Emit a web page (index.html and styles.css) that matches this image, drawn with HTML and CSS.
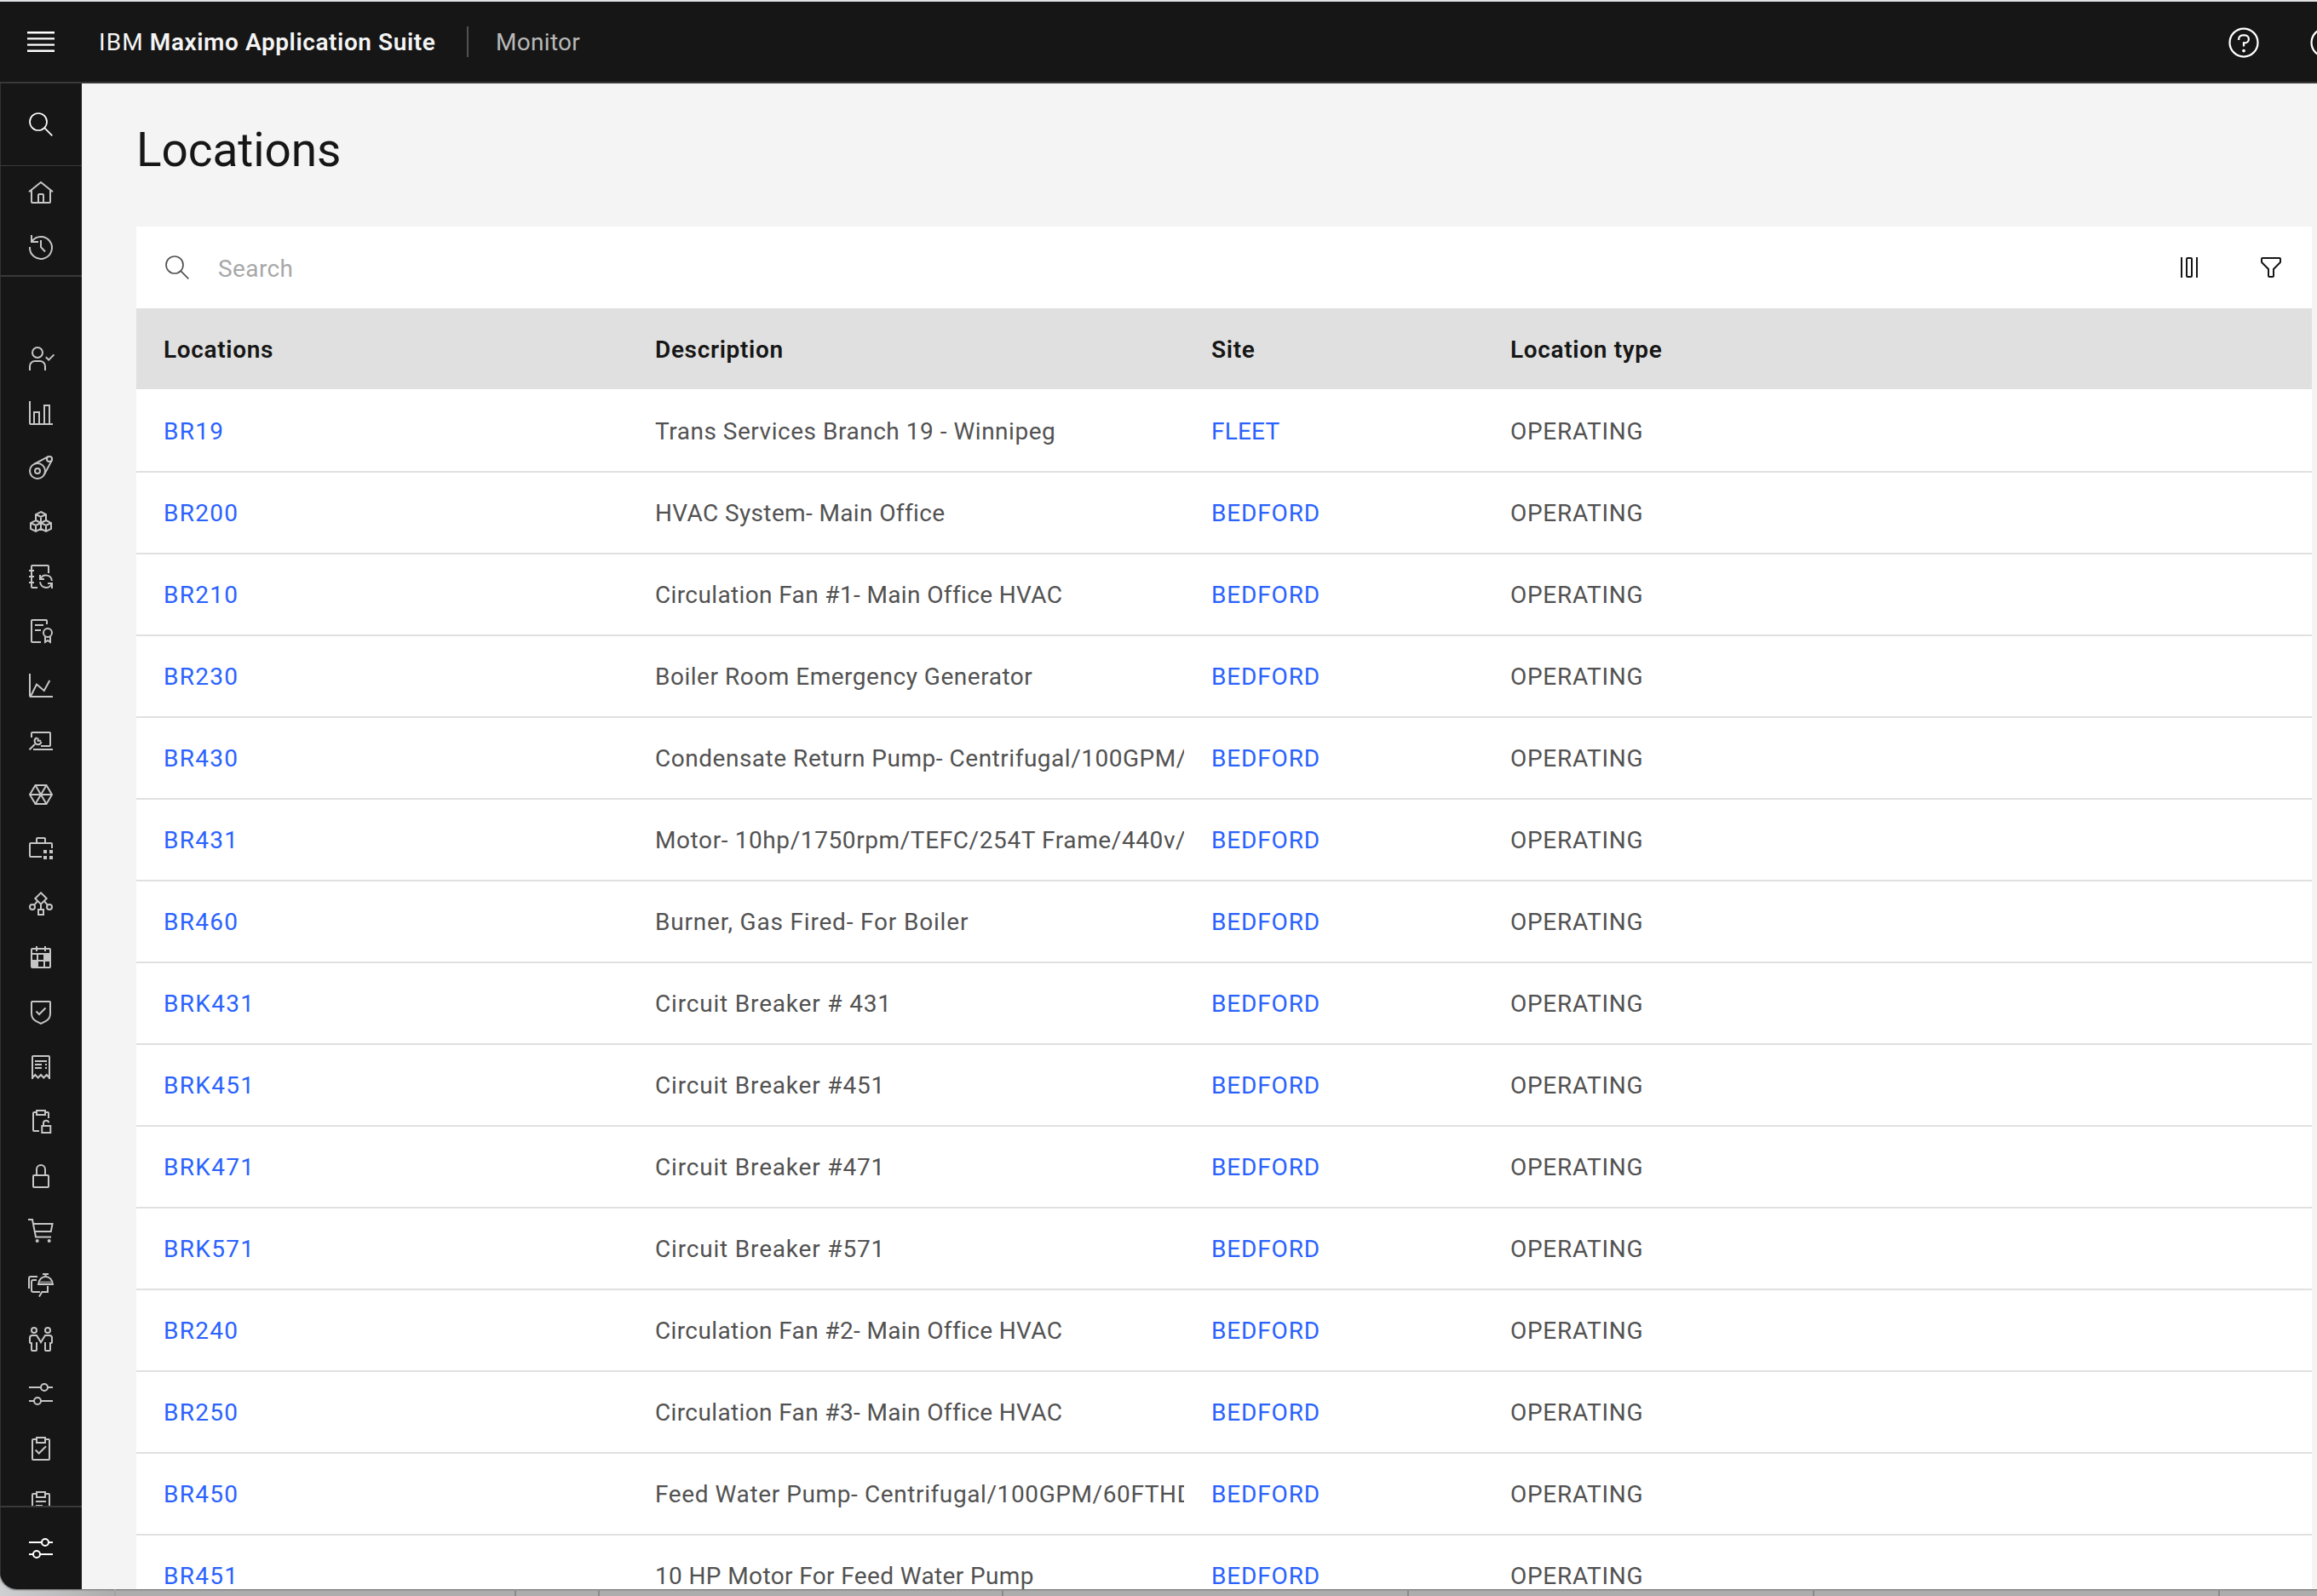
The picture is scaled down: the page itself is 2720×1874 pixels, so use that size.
FILE: index.html
```html
<!DOCTYPE html>
<html lang="en">
<head>
<meta charset="utf-8">
<title>Locations - Monitor</title>
<link rel="stylesheet" href="styles.css">
</head>
<body>
<div class="window">
  <header class="header">
    <button class="menu-button" aria-label="Menu">
      <svg class="menu-icon" viewBox="0 0 40 40"><path d="M4 9.2h32M4 16.4h32M4 23.6h32M4 30.8h32"/></svg>
    </button>
    <div class="brand"><span class="brand-prefix">IBM</span><span class="brand-name">Maximo Application Suite</span></div>
    <div class="app-name">Monitor</div>
    <div class="header-actions">
      <svg class="action-icon" viewBox="0 0 32 32"><circle cx="16" cy="16" r="13.2"/><path d="M11.3 13.6v-.9a3.6 3.6 0 0 1 3.6-3.6h2.2a3.6 3.6 0 0 1 0 7.2H16v3.3"/><circle class="solid" cx="16" cy="23.6" r="1.5"/></svg>
      <svg class="action-icon" viewBox="0 0 32 32"><circle cx="16" cy="16" r="13.2"/></svg>
    </div>
  </header>
  <div class="body">
    <nav class="rail">
      <div class="rail-search"><svg class="icon thin" viewBox="0 0 32 32"><circle cx="13" cy="13" r="10"/><path d="M20.2 20.2L29.3 29.3"/></svg></div>
      <div class="rail-top">
        <svg class="icon" viewBox="0 0 32 32"><path d="M2 15.2L16 4l14 11.2M5 13v14a1 1 0 0 0 1 1h20a1 1 0 0 0 1-1V13M13 28V19a1 1 0 0 1 1-1h4a1 1 0 0 1 1 1v9"/></svg>
        <svg class="icon" viewBox="0 0 32 32"><path d="M5 3v8h8M5.3 10.5A13 13 0 1 1 3 17M16 9v8.2l5 5.3"/></svg>
      </div>
      <div class="rail-list">
        <svg class="icon" viewBox="0 0 32 32"><circle cx="12" cy="9" r="6"/><path d="M3 30v-5a6 6 0 0 1 6-6h6a6 6 0 0 1 6 6v5M21.8 14.2l3.4 3.4 6.2-6.2"/></svg>
        <svg class="icon" viewBox="0 0 32 32"><path d="M3 2v26a1 1 0 0 0 1 1h26M8 29V15h6v14M20 29V7h6v22"/></svg>
        <svg class="icon" viewBox="0 0 32 32"><circle cx="12" cy="20" r="9"/><circle cx="12" cy="20" r="3"/><circle cx="26" cy="6" r="3.1"/><path d="M8.2 11.8L24.6 3.2M28.9 7.4L20.4 23.4"/></svg>
        <svg class="icon" viewBox="0 0 32 32"><path d="M16 4l6 3v7l-6 3-6-3V7zM10 7l6 3 6-3M16 10v7M10 14l6 3v7l-6 3-6-3v-7zM4 17l6 3 6-3M10 20v7M22 14l6 3v7l-6 3-6-3v-7zM16 17l6 3 6-3M22 20v7"/></svg>
        <svg class="icon" viewBox="0 0 32 32"><path d="M25 12V4a1 1 0 0 0-1-1H6a1 1 0 0 0-1 1v24a1 1 0 0 0 1 1h6M2 9h6M2 16h6M2 23h6M15 14v5h5M15.4 19a7 7 0 0 1 13.5 2M29 30v-6h-5M28.6 24.5A7 7 0 0 1 15.1 22.3"/></svg>
        <svg class="icon" viewBox="0 0 32 32"><path d="M23 8V4a1 1 0 0 0-1-1H6a1 1 0 0 0-1 1v24a1 1 0 0 0 1 1h10M9 9h10M9 15h7M21 22.5V29l3-2 3 2v-6.500"/><circle cx="24" cy="18" r="5"/></svg>
        <svg class="icon" viewBox="0 0 32 32"><path d="M3 2v26a1 1 0 0 0 1 1h26M4 28.500L11 14.500l8.800 7.500 6.500-12"/></svg>
        <svg class="icon" viewBox="0 0 32 32"><path d="M5 13V8a1 1 0 0 1 1-1h20a1 1 0 0 1 1 1v14a1 1 0 0 1-1 1H16M7 27h23M2.500 27.300l6.300-6.300M11.500 13.300a4 4 0 1 0 5 4.700M12.600 13.500v3.300h3.600"/></svg>
        <svg class="icon" viewBox="0 0 32 32"><path d="M9.500 5h13L29 16l-6.500 11h-13L3 16zM3 16h26M9.500 5l13 22M22.500 5l-13 22"/></svg>
        <svg class="icon" viewBox="0 0 32 32"><path d="M29 15v-5a1 1 0 0 0-1-1H4a1 1 0 0 0-1 1v14a1 1 0 0 0 1 1h13M11 9V4a1 1 0 0 1 1-1h8a1 1 0 0 1 1 1v5"/><path class="solid" d="M19 17h4v4h-4zM26 17h4v4h-4zM19 24h4v4h-4zM26 24h4v4h-4z"/></svg>
        <svg class="icon" viewBox="0 0 32 32"><path d="M16 3.300L22.700 10 16 16.700 9.300 10zM16 17v6M8.200 17.600l3.600-4.300M23.800 17.600l-3.600-4.300M13 23h6v6h-6z"/><circle cx="6" cy="20" r="3"/><circle cx="26" cy="20" r="3"/></svg>
        <svg class="icon" viewBox="0 0 32 32"><path class="solid" fill-rule="evenodd" d="M6 4h4V2h2v2h8V2h2v2h4a2 2 0 0 1 2 2v20a2 2 0 0 1-2 2H6a2 2 0 0 1-2-2V6a2 2 0 0 1 2-2zM6 6v4h20V6h-4v2h-2V6h-8v2h-2V6zM6 12v6h5v-6zM13 12v6h6v-6zM13 20v6h6v-6zM21 20v6h5v-6z"/></svg>
        <svg class="icon" viewBox="0 0 32 32"><path d="M6 3h20a1 1 0 0 1 1 1v13c0 5-2.500 7.600-5.500 9.200L16 29l-5.500-2.800C7.500 24.600 5 22 5 17V4a1 1 0 0 1 1-1zM10.500 14.500l3.500 3.500 7.500-7.500"/></svg>
        <svg class="icon" viewBox="0 0 32 32"><path d="M6 30V4a1 1 0 0 1 1-1h18a1 1 0 0 1 1 1v26M6 28.500l3.300-3.500 3.400 3.500L16 25l3.300 3.500 3.400-3.500 3.300 3.500M9 9h14M9 13h8M9 17h8M21 13h2M21 17h2"/></svg>
        <svg class="icon" viewBox="0 0 32 32"><path d="M11 5H8a1 1 0 0 0-1 1v20a1 1 0 0 0 1 1h6M21 5h3a1 1 0 0 1 1 1v6M11 3h10v5H11zM17.300 21h10v8h-10zM19 21v-3a3.200 3.200 0 0 1 6.300-.800"/></svg>
        <svg class="icon" viewBox="0 0 32 32"><rect x="7" y="15" width="18" height="14" rx="1"/><path d="M11 15V8a5 5 0 0 1 10 0v7"/></svg>
        <svg class="icon" viewBox="0 0 32 32"><path d="M1 3h5l4 20.500h18M7 8h22.500l-1.700 9H8.800"/><circle class="solid" cx="11.700" cy="28" r="2"/><circle class="solid" cx="25.700" cy="28" r="2"/></svg>
        <svg class="icon" viewBox="0 0 32 32"><path d="M2 20V8a2 2 0 0 1 2-2h8M11 10H7a2 2 0 0 0-2 2v10a2 2 0 0 0 2 2h8M14 29.500l3.300-5.500H24V17M12 15h19M13.500 14a8 8 0 0 1 16 0M21.500 6V3M18 3h7"/><path class="muted" d="M14 12.500h15"/></svg>
        <svg class="icon" viewBox="0 0 32 32"><circle cx="8" cy="5" r="3"/><circle cx="24" cy="5" r="3"/><path d="M11 19v9a1 1 0 0 1-1 1H6a1 1 0 0 1-1-1v-8H4a1 1 0 0 1-1-1v-5a3 3 0 0 1 3-3h5l5 8 5-8h5a3 3 0 0 1 3 3v5a1 1 0 0 1-1 1h-1v8a1 1 0 0 1-1 1h-4a1 1 0 0 1-1-1v-9"/></svg>
        <svg class="icon" viewBox="0 0 32 32"><path d="M2 8h14M24 8h6M2 24h6M16 24h14"/><circle cx="20" cy="8" r="4"/><circle cx="12" cy="24" r="4"/></svg>
        <svg class="icon" viewBox="0 0 32 32"><path d="M11 5H7a1 1 0 0 0-1 1v22a1 1 0 0 0 1 1h18a1 1 0 0 0 1-1V6a1 1 0 0 0-1-1h-4M11 3h10v6H11zM9.700 17.500l4 4 8.300-8.300"/></svg>
        <svg class="icon" viewBox="0 0 32 32"><path d="M11 5H7a1 1 0 0 0-1 1v22a1 1 0 0 0 1 1h18a1 1 0 0 0 1-1V6a1 1 0 0 0-1-1h-4M11 3h10v6H11zM10 14h12M10 19h8"/></svg>
      </div>
      <div class="rail-bottom"><svg class="icon" viewBox="0 0 32 32"><path d="M2 9h15M25 9h5M2 23h5M15 23h15"/><circle cx="21" cy="9" r="4"/><circle cx="11" cy="23" r="4"/></svg></div>
    </nav>
    <main class="main">
      <h1 class="title">Locations</h1>
      <section class="card">
        <div class="toolbar">
          <svg class="icon thin search-icon" viewBox="0 0 32 32"><circle cx="13" cy="13" r="10"/><path d="M20.2 20.2L29.3 29.3"/></svg>
          <div class="placeholder">Search</div>
          <button class="tool" aria-label="Columns"><svg class="icon" viewBox="0 0 32 32"><path d="M7 4v24M25 4v24"/><rect x="13" y="5" width="6" height="22" rx="1"/></svg></button>
          <button class="tool" aria-label="Filter"><svg class="icon" viewBox="0 0 32 32"><path class="solid" d="M18 28H14a2 2 0 0 1-2-2V18.410L4.590 11A2 2 0 0 1 4 9.590V6A2 2 0 0 1 6 4H26a2 2 0 0 1 2 2V9.590A2 2 0 0 1 27.410 11L20 18.410V26A2 2 0 0 1 18 28ZM6 6V9.590l8 8V26h4V17.590l8-8V6Z"/></svg></button>
        </div>
        <div class="row head"><div>Locations</div><div>Description</div><div>Site</div><div>Location type</div></div>
        <div class="row"><a>BR19</a><div class="desc">Trans Services Branch 19 - Winnipeg</div><a class="site short">FLEET</a><div class="type">OPERATING</div></div>
        <div class="row"><a>BR200</a><div class="desc tight">HVAC System- Main Office</div><a class="site">BEDFORD</a><div class="type">OPERATING</div></div>
        <div class="row"><a>BR210</a><div class="desc tight">Circulation Fan #1- Main Office HVAC</div><a class="site">BEDFORD</a><div class="type">OPERATING</div></div>
        <div class="row"><a>BR230</a><div class="desc">Boiler Room Emergency Generator</div><a class="site">BEDFORD</a><div class="type">OPERATING</div></div>
        <div class="row"><a>BR430</a><div class="desc">Condensate Return Pump- Centrifugal/100GPM/</div><a class="site">BEDFORD</a><div class="type">OPERATING</div></div>
        <div class="row"><a>BR431</a><div class="desc loose">Motor- 10hp/1750rpm/TEFC/254T Frame/440v/</div><a class="site">BEDFORD</a><div class="type">OPERATING</div></div>
        <div class="row"><a>BR460</a><div class="desc wide">Burner, Gas Fired- For Boiler</div><a class="site">BEDFORD</a><div class="type">OPERATING</div></div>
        <div class="row"><a>BRK431</a><div class="desc wide">Circuit Breaker # 431</div><a class="site">BEDFORD</a><div class="type">OPERATING</div></div>
        <div class="row"><a>BRK451</a><div class="desc wide">Circuit Breaker #451</div><a class="site">BEDFORD</a><div class="type">OPERATING</div></div>
        <div class="row"><a>BRK471</a><div class="desc wide">Circuit Breaker #471</div><a class="site">BEDFORD</a><div class="type">OPERATING</div></div>
        <div class="row"><a>BRK571</a><div class="desc wide">Circuit Breaker #571</div><a class="site">BEDFORD</a><div class="type">OPERATING</div></div>
        <div class="row"><a>BR240</a><div class="desc tight">Circulation Fan #2- Main Office HVAC</div><a class="site">BEDFORD</a><div class="type">OPERATING</div></div>
        <div class="row"><a>BR250</a><div class="desc tight">Circulation Fan #3- Main Office HVAC</div><a class="site">BEDFORD</a><div class="type">OPERATING</div></div>
        <div class="row"><a>BR450</a><div class="desc loose">Feed Water Pump- Centrifugal/100GPM/60FTHD</div><a class="site">BEDFORD</a><div class="type">OPERATING</div></div>
        <div class="row"><a>BR451</a><div class="desc tight">10 HP Motor For Feed Water Pump</div><a class="site">BEDFORD</a><div class="type">OPERATING</div></div>
      </section>
    </main>
  </div>
</div>
<div class="desk"><i></i><i></i><i></i><i></i><i></i><i></i><i></i></div>
</body>
</html>
```
FILE: styles.css
```css
* {
  box-sizing: border-box;
}

body {
  margin: 0;
  height: 1874px;
  overflow: hidden;
  display: flex;
  flex-direction: column;
  background: linear-gradient(90deg, #cfd0d2 0, #adadad 130px);
  font-family: Roboto, "Liberation Sans", sans-serif;
  font-size: 28px;
  line-height: 36px;
  color: #161616;
}

button {
  padding: 0;
  border: 0;
  background: none;
  color: inherit;
}

.window {
  height: 1866px;
  flex: none;
  display: flex;
  flex-direction: column;
  overflow: hidden;
  border-top: 2px solid #dfe1e2;
  border-bottom-left-radius: 20px;
  background: #f4f4f4;
  box-shadow: 0 0 2px 1px #6f6f6f;
}

/* Header */
.header {
  height: 96px;
  flex: none;
  display: flex;
  align-items: center;
  overflow: hidden;
  background: #161616;
  border-bottom: 2px solid #393939;
  color: #f4f4f4;
}

.menu-button {
  width: 96px;
  flex: none;
  display: flex;
  justify-content: center;
}

.menu-icon {
  width: 40px;
  height: 40px;
  stroke: #fff;
  stroke-width: 2.4;
}

.brand {
  width: 452px;
  padding: 1px 0 0 20px;
  flex: none;
  display: flex;
  gap: 7px;
  white-space: nowrap;
}

.brand-prefix {
  letter-spacing: 1.1px;
}

.brand-name {
  font-weight: 600;
  letter-spacing: 0.58px;
}

.app-name {
  height: 36px;
  padding-left: 32px;
  padding-top: 1px;
  border-left: 2px solid #525252;
  color: #b8b8b8;
  letter-spacing: 0.3px;
}

.header-actions {
  margin-left: auto;
  margin-right: -30px;
  padding-top: 1px;
  display: flex;
  gap: 56px;
}

.action-icon {
  width: 40px;
  height: 40px;
  flex: none;
  fill: none;
  stroke: #fff;
  stroke-width: 1.8;
}

.action-icon .solid {
  fill: #fff;
  stroke: none;
}

.body {
  flex: 1;
  min-height: 0;
  display: flex;
}

/* Icon rail */
.icon {
  width: 32px;
  height: 32px;
  flex: none;
  fill: none;
  stroke: currentColor;
  stroke-width: 2;
  overflow: visible;
}

.icon.thin {
  stroke-width: 1.7;
}

.icon .solid {
  fill: currentColor;
  stroke: none;
}

.icon .muted {
  stroke: #8d8d8d;
}

.rail {
  width: 96px;
  flex: none;
  display: flex;
  flex-direction: column;
  background: #161616;
  color: #c6c6c6;
  box-shadow: inset 1px 0 #333;
}

.rail-search,
.rail-bottom {
  height: 96px;
  flex: none;
  display: flex;
  align-items: center;
  justify-content: center;
  color: #fff;
}

.rail-top {
  height: 131px;
  flex: none;
  padding-top: 15px;
  display: flex;
  flex-direction: column;
  align-items: center;
  gap: 31px;
  border-top: 1px solid #393939;
  border-bottom: 2px solid #393939;
}

.rail-list {
  flex: 1;
  min-height: 0;
  padding-top: 80px;
  display: flex;
  flex-direction: column;
  align-items: center;
  gap: 32px;
  overflow: hidden;
}

.rail-bottom {
  height: 98px;
  border-top: 2px solid #393939;
}

/* Page */
.main {
  flex: 1;
  min-width: 0;
  padding: 42px 6px 0 64px;
}

.title {
  height: 126px;
  margin: 0;
  font-size: 55px;
  font-weight: 400;
  line-height: 72px;
  letter-spacing: -0.1px;
}

.card {
  background: #fff;
}

.toolbar {
  height: 96px;
  padding-left: 32px;
  display: flex;
  align-items: center;
}

.search-icon {
  color: #525252;
}

.placeholder {
  flex: 1;
  padding: 3px 0 0 32px;
  color: #a8a8a8;
  letter-spacing: 0.4px;
}

.tool {
  width: 96px;
  height: 96px;
  display: flex;
  align-items: center;
  justify-content: center;
}

.row {
  height: 96px;
  padding-top: 2px;
  display: grid;
  grid-template-columns: 577px 653px 351px 1fr;
  align-items: center;
  border-bottom: 2px solid #e0e0e0;
  color: #525252;
}

.row > * {
  margin-left: 32px;
  overflow: hidden;
  white-space: nowrap;
}

.row a {
  color: #2a62ff;
  letter-spacing: 1.3px;
}

.row .site {
  letter-spacing: 0.85px;
}

.row .short {
  letter-spacing: 0.2px;
}

.desc {
  letter-spacing: 0.52px;
}

.desc.tight {
  letter-spacing: 0.37px;
}

.desc.loose {
  letter-spacing: 0.6px;
}

.desc.wide {
  letter-spacing: 0.82px;
}

.type {
  letter-spacing: 0.7px;
}

.row.head {
  height: 97px;
  padding-top: 3px;
  border-bottom-color: #fff;
  background: #e0e0e0;
  background-clip: padding-box;
  color: #161616;
  font-weight: 600;
  letter-spacing: 0.66px;
}

/* Strip of desktop visible below the window */
.desk {
  flex: 1;
  display: grid;
  grid-template-columns: 136px 470px 98px 474px 476px 476px 476px;
}

.desk i {
  border-right: 2px solid #8a8a8a;
}

.desk i:first-child {
  border-right-color: #a2a2a2;
}
```
